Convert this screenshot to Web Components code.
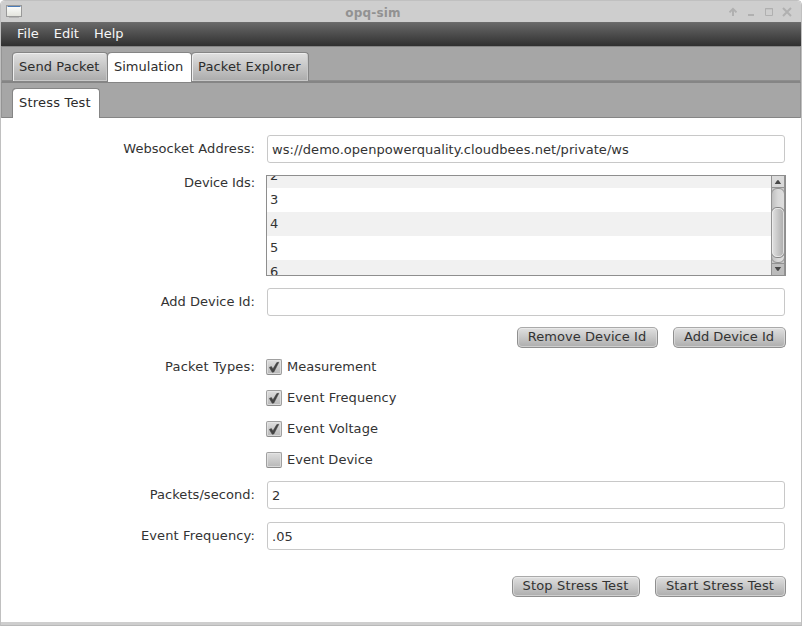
<!DOCTYPE html>
<html lang="en">
<head>
<meta charset="utf-8">
<title>opq-sim</title>
<style>
html,body{margin:0;width:802px;height:626px;overflow:hidden;background:#fff}
body{font:13px/16px "DejaVu Sans",sans-serif;color:#333}
</style>
</head>
<body>
<sim-window caption="opq-sim">
  <menu-bar><menu-item>File</menu-item><menu-item>Edit</menu-item><menu-item>Help</menu-item></menu-bar>
  <tab-strip style="--h:36px"><tab-item style="width:95px;letter-spacing:.1px">Send Packet</tab-item><tab-item active style="width:84px">Simulation</tab-item><tab-item style="width:117px;letter-spacing:.13px">Packet Explorer</tab-item></tab-strip>
  <tab-strip last style="--h:36px"><tab-item active style="width:87px;letter-spacing:.2px">Stress Test</tab-item></tab-strip>
  <sim-form>
    <form-row label="Websocket Address:" style="height:28px;--lt:5px;--ls:.06px"><text-field style="letter-spacing:.05px">ws://demo.openpowerquality.cloudbees.net/private/ws</text-field></form-row>
    <form-row label="Device Ids:" style="height:101px;margin-top:12px;--lt:-1px;--ls:-.08px"><id-list><id-item>2</id-item><id-item>3</id-item><id-item>4</id-item><id-item>5</id-item><id-item>6</id-item></id-list></form-row>
    <form-row label="Add Device Id:" style="height:28px;margin-top:12px;--lt:5px"><text-field></text-field></form-row>
    <button-row style="margin-top:11px;gap:15px"><push-button style="width:141px;letter-spacing:.06px">Remove Device Id</push-button><push-button style="width:113px">Add Device Id</push-button></button-row>
    <form-row label="Packet Types:" style="height:109px;margin-top:11px;--lt:-1px;--ls:.17px"><check-group><check-box checked>Measurement</check-box><check-box checked style="letter-spacing:.07px">Event Frequency</check-box><check-box checked style="letter-spacing:.07px">Event Voltage</check-box><check-box>Event Device</check-box></check-group></form-row>
    <form-row label="Packets/second:" style="height:28px;margin-top:13px;--lt:5px;--ls:.06px"><text-field>2</text-field></form-row>
    <form-row label="Event Frequency:" style="height:28px;margin-top:13px;--lt:5px;--ls:.13px"><text-field>.05</text-field></form-row>
    <button-row style="margin-top:26px;gap:15px"><push-button style="width:128px;letter-spacing:.15px">Stop Stress Test</push-button><push-button style="width:131px;letter-spacing:.15px">Start Stress Test</push-button></button-row>
  </sim-form>
</sim-window>
<script>
const define = (name, html) => customElements.define(name, class extends HTMLElement {
  constructor() {
    super();
    this.attachShadow({mode: 'open'}).innerHTML = typeof html === 'function' ? html(this) : html;
  }
});

define('sim-window', el => `<style>
:host{display:flex;flex-direction:column;box-sizing:border-box;width:802px;height:626px;border:1px solid #c0c0c0;border-bottom:1px solid #b9b9b9;border-radius:5px 5px 0 0;overflow:hidden;background:#fff}
header{height:21px;flex:none;background:#cecece;display:grid;grid-template-columns:72px 1fr 72px;align-items:center}
.icon{display:block;margin-left:5px;margin-top:1px}
h1{font:bold 12px/16px "DejaVu Sans",sans-serif;color:#929292;margin:2px 0 0;text-align:center;letter-spacing:.2px;transform:translateX(-28px)}
footer{height:3px;flex:none;background:#cecece;margin-top:auto}
</style>
<header>
<svg class="icon" width="17" height="14" viewBox="0 0 17 14"><defs><linearGradient id="g" x2="0" y2="1"><stop stop-color="#fff"/><stop offset="1" stop-color="#e2e3dc"/></linearGradient></defs><path d="M3 12.5h10" stroke="#b4b4b4"/><rect x=".5" y=".5" width="15" height="11" fill="url(#g)" stroke="#999"/><path d="M1.5 1.5h13" stroke="#4b7cb8"/></svg>
<h1>${el.getAttribute('caption')}</h1>
<svg width="72" height="21" viewBox="729 1 72 21" fill="none" stroke="#b0b0b0"><path d="M733 8.5v7.5M729.5 12.4l3.5-3.5 3.5 3.5" stroke-width="2"/><path d="M748 15h6" stroke-width="2"/><path d="M765.5 8.5h7v7h-7z"/><path d="M765 8.8h8"/><path d="M783 8l8 8M791 8l-8 8" stroke-width="2"/></svg>
</header><slot></slot><footer></footer>`);

define('menu-bar', `<style>:host{display:flex;box-sizing:border-box;height:24px;flex:none;padding:3px 16px 0;gap:15px;background:linear-gradient(#686868,#303030);border-top:1px solid #6c6c6c;color:#f6f6f6}</style><slot></slot>`);
define('menu-item', `<style>:host{display:block}</style><slot></slot>`);

define('tab-strip', `<style>
:host{display:flex;box-sizing:border-box;height:var(--h);flex:none;align-items:flex-end;padding:0 11px;background:#a6a6a6;border:1px solid #949494;border-top:1px solid #858585;border-bottom:0;box-shadow:inset 0 -1px #858585,inset 0 -2px #8d8d8d}
:host([last]){box-shadow:inset 0 -1px #858585}
</style><slot></slot>`);
define('tab-item', `<style>
:host{display:block;box-sizing:border-box;height:29px;padding:6px 0 0 6px;border:1px solid #858585;border-width:1px 1px 0 0;border-radius:4px 4px 0 0;color:#2c2c2c;background:linear-gradient(#e0e0e0,#ababab);box-shadow:inset 1px 1px #eee,inset -1px -1px #c8c8c8,-1px 0 #858585;margin-bottom:1px;white-space:nowrap}
:host([active]){background:#fff;box-shadow:-1px 0 #858585;height:30px;margin-bottom:0}
:host(:last-child){margin-right:0}
</style><slot></slot>`);

define('sim-form', `<style>:host{display:block;padding:17px 15px 0 15px}</style><slot></slot>`);
define('form-row', el => `<style>
:host{display:grid;grid-template-columns:239px 519px;column-gap:11px}
label{text-align:right;padding-top:calc(var(--lt) + 1px);white-space:nowrap;letter-spacing:var(--ls,0)}
</style><label>${el.getAttribute('label')}</label><slot></slot>`);
define('text-field', `<style>:host{display:block;box-sizing:border-box;height:28px;margin-left:1px;padding:6px 4px 0;border:1px solid #c8c8c8;border-radius:3px;background:#fff}</style><slot></slot>`);
define('button-row', `<style>:host{display:flex;justify-content:flex-end}</style><slot></slot>`);
define('push-button', `<style>:host{display:block;box-sizing:border-box;height:21px;padding-top:1px;border:1px solid #8f8f8f;border-top-color:#aaa;border-radius:5px;background:linear-gradient(#e0e0e0,#adadad);box-shadow:inset 0 0 0 1px #e2e2e2a0,inset 0 1px #f4f4f4;text-align:center;white-space:nowrap;text-indent:-1px}</style><slot></slot>`);
define('check-group', `<style>:host{display:flex;flex-direction:column;gap:15px}</style><slot></slot>`);
define('check-box', el => `<style>:host{display:flex;height:16px;gap:5px;line-height:15px}
i{box-sizing:border-box;width:16px;height:16px;border:1px solid #a0a0a0;border-bottom-color:#8c8c8c;border-radius:2px;background:linear-gradient(#dedede,#b8b8b8);box-shadow:inset 0 0 0 1px #e6e6e6b0}
svg{display:block}</style><i>${el.hasAttribute('checked') ? '<svg width="14" height="14" viewBox="0 0 14 14"><path d="M2.4 7.4 4.4 6.6 5.9 9 9.8 2.6 11.8 2.3 6.8 12 5.2 12.2Z" fill="#444" stroke="#444" stroke-width=".6"/></svg>' : ''}</i><slot></slot>`);

define('id-list', `<style>
:host{display:flex;box-sizing:border-box;width:520px;height:101px;border:1px solid #8e8e8e;background:#fff;overflow:hidden}
.rows{flex:1;display:flex;flex-direction:column;justify-content:flex-start;overflow:hidden}
.rows::before{content:"";flex:none;margin-top:-12px}
</style><div class="rows"><slot></slot></div><scroll-bar></scroll-bar>`);
define('id-item', `<style>:host{display:block;box-sizing:border-box;height:24px;flex:none;padding:4px 3px}:host(:nth-child(odd)){background:#f1f1f1}</style><slot></slot>`);
define('scroll-bar', `<style>:host{display:block;width:14px;height:99px;flex:none}svg{display:block}</style>
<svg width="14" height="99" viewBox="0 0 14 99"><defs><linearGradient id="t"><stop stop-color="#bebebe"/><stop offset=".5" stop-color="#d8d8d8"/><stop offset="1" stop-color="#dedede"/></linearGradient><linearGradient id="h"><stop stop-color="#e4e4e4"/><stop offset="1" stop-color="#a9a9a9"/></linearGradient><linearGradient id="b" x2="0" y2="1"><stop stop-color="#dcdcdc"/><stop offset="1" stop-color="#bbb"/></linearGradient></defs>
<rect width="14" height="99" fill="#c9c9c9"/>
<rect x=".5" y="12.5" width="13" height="74" rx="5.5" fill="url(#t)" stroke="#929292"/>
<rect x=".5" y="31.5" width="13" height="50" rx="5.5" fill="url(#h)" stroke="#858585"/><rect x="1.5" y="32.5" width="11" height="48" rx="4.5" fill="none" stroke="#ededed" stroke-opacity=".8"/>
<path d="M0 0h14v11.5H0zM0 87.5h14V99H0z" fill="url(#b)"/><path d="M0 11.5h14M0 87.5h14M.5 0v99M13.5 0v99" stroke="#929292"/>
<path d="M3.7 8 6.2 4.3h1.4L10.1 8zM3.7 91h6.4L7.6 94.7H6.2z" fill="#484848"/></svg>`);
</script>
</body>
</html>
